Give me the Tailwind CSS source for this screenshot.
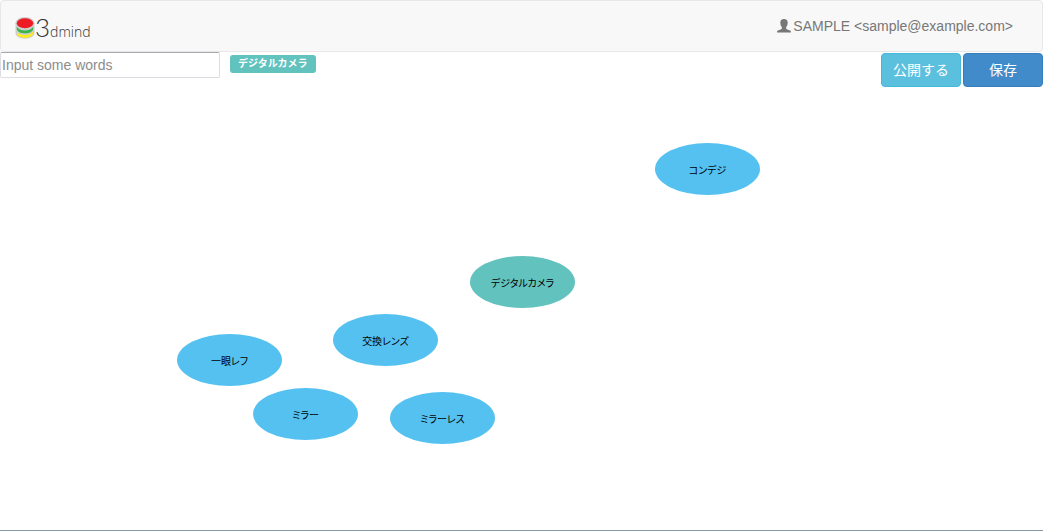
<!DOCTYPE html>
<html lang="ja">
<head>
<meta charset="utf-8">
<meta name="viewport" content="width=device-width, initial-scale=1">
<title>3dmind</title>
<script src="https://cdn.jsdelivr.net/npm/@tailwindcss/browser@4"></script>
</head>
<body class="flex min-h-screen flex-col border-b border-[#8799a8] bg-white font-['Liberation_Sans','Noto_Sans_CJK_JP',sans-serif] text-sm text-[#333]">
<nav class="flex h-[52px] items-center justify-between rounded border border-[#e7e7e7] bg-[#f8f8f8] pr-[29px] pl-[14px]">
  <a href="#" class="flex items-center text-[#333]" aria-label="3dmind">
    <svg class="mt-1 h-[22px] w-5" viewBox="0 0 20 22" aria-hidden="true">
      <path d="M.5 6v10c0 3.200 4.200 5.700 9.500 5.700s9.500-2.500 9.500-5.700V6z" fill="#cdcdcd"/>
      <path d="M2 14.500v1.700c0 2.500 3.500 4.500 8 4.500s8-2 8-4.500v-1.700c-1 2.300-4 3.500-8 3.500s-7-1.200-8-3.500z" fill="#fbec20"/>
      <path d="M1.800 9.800v2.200c.5 2.700 4 4.300 8.200 4.300s7.700-1.600 8.200-4.300V9.800c-1.200 2.400-4.200 3.800-8.200 3.800S3 12.200 1.800 9.800z" fill="#39b54a"/>
      <ellipse cx="10" cy="6.300" rx="9.500" ry="6.300" fill="#cdcdcd"/>
      <ellipse cx="10" cy="6.300" rx="8.200" ry="5" fill="#ed1c24"/>
    </svg>
    <span class="flex items-baseline pt-px font-['Open_Sans',sans-serif] font-light"><span class="font-['Lato',sans-serif] text-[26px] leading-8 font-light">3</span><span class="text-sm">dmind</span></span>
  </a>
  <a href="#" class="flex items-center gap-[2px] text-[#777]">
    <svg class="h-[14px] w-[14px]" viewBox="0 0 14 14" fill="currentColor" aria-hidden="true"><path d="M7 0C4.500 0 3.300 1.300 3.300 3.500c0 1.900.6 3.600 1.600 4.700v1.100c0 .5-.3.800-.8 1L1 11.500C.2 11.900 0 12.600 0 13.500h14c0-.9-.2-1.600-1-2l-3.100-1.200c-.5-.2-.8-.5-.8-1V8.200c1-1.100 1.600-2.800 1.600-4.700C10.700 1.300 9.500 0 7 0z"/></svg>
    <span>SAMPLE &lt;sample@example.com&gt;</span>
  </a>
</nav>
<div class="flex h-[35px] items-start">
  <input type="text" aria-label="Input some words" placeholder="Input some words" class="h-[26px] w-[220px] rounded-xs border border-[#dcdce2] border-t-[#a9a9b0] px-px placeholder:text-[#8c8c8c]">
  <span class="mt-[3px] ml-[10px] flex h-[18px] items-center rounded-[3px] bg-[#62c2be] px-2 pb-px text-[10px] leading-4 font-bold text-white">デジタルカメラ</span>
  <div class="mt-px ml-auto flex gap-[2px]">
    <button type="button" class="h-[34px] w-20 rounded border border-[#46b8da] bg-[#5bc0de] pb-px text-white">公開する</button>
    <button type="button" class="h-[34px] w-20 rounded border border-[#357ebd] bg-[#428bca] pb-px text-white">保存</button>
  </div>
</div>
<!-- Mind map canvas: nodes sit at free positions -->
<main class="relative grow text-[10px] leading-3 text-black [font-feature-settings:'palt'] *:absolute *:flex *:h-[52px] *:w-[105px] *:items-center *:justify-center *:rounded-[50%] *:pt-1">
  <div class="top-[56px] left-[655px] bg-[#55c1f1]">コンデジ</div>
  <div class="top-[169px] left-[470px] bg-[#62c2be]">デジタルカメラ</div>
  <div class="top-[227px] left-[333px] bg-[#55c1f1]">交換レンズ</div>
  <div class="top-[247px] left-[177px] bg-[#55c1f1]">一眼レフ</div>
  <div class="top-[301px] left-[253px] bg-[#55c1f1]">ミラー</div>
  <div class="top-[305px] left-[390px] bg-[#55c1f1]">ミラーレス</div>
</main>
</body>
</html>
